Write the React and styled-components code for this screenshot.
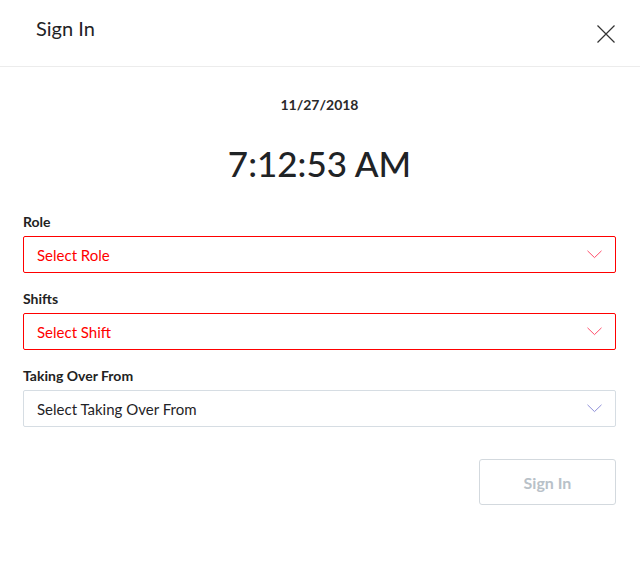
import React from "react";
import styled, { createGlobalStyle } from "styled-components";

const Global = createGlobalStyle`
  html, body { margin: 0; padding: 0; background: #fff; }
  body { font-family: Lato, "Open Sans", sans-serif; color: #1f2326; }
`;

const Dialog = styled.div`
  width: 640px;
  height: 572px;
  background: #fff;
  display: flex;
  flex-direction: column;
`;

const Header = styled.div`
  height: 67px;
  box-sizing: border-box;
  border-bottom: 1px solid #ececec;
  display: flex;
  align-items: flex-start;
  justify-content: space-between;
  padding: 15px 24px 0 36px;
`;

const Title = styled.h1`
  margin: 0;
  font-size: 20px;
  font-weight: 400;
  line-height: 26px;
  color: #1f2326;
`;

const CloseButton = styled.button`
  border: none;
  background: none;
  padding: 0;
  margin-top: 9px;
  width: 20px;
  height: 20px;
  display: flex;
  align-items: center;
  justify-content: center;
  cursor: pointer;
`;

const Body = styled.div`
  padding: 29px 24px 0 23px;
  display: flex;
  flex-direction: column;
`;

const DateText = styled.div`
  text-align: center;
  font-size: 14px;
  font-weight: 700;
  line-height: 18px;
  color: #2a2a2a;
`;

const TimeText = styled.div`
  text-align: center;
  font-size: 35px;
  font-weight: 500;
  line-height: 44px;
  margin-top: 27px;
  color: #1f2326;
`;

const Form = styled.div`
  margin-top: 28px;
  display: flex;
  flex-direction: column;
  gap: 17px;
`;

const Field = styled.div`
  display: flex;
  flex-direction: column;
  gap: 5px;
`;

const Label = styled.label`
  font-size: 14px;
  font-weight: 700;
  line-height: 18px;
  color: #222;
`;

const SelectBox = styled.div`
  height: 37px;
  box-sizing: border-box;
  border: 1px solid ${(p) => (p.$error ? "#ff0000" : "#d6dde3")};
  border-radius: 2px;
  display: flex;
  align-items: center;
  justify-content: space-between;
  padding: 0 13px 0 13px;
  font-size: 15px;
  color: ${(p) => (p.$error ? "#ff0000" : "#1f2326")};
`;

const Actions = styled.div`
  display: flex;
  justify-content: flex-end;
  margin-top: 32px;
`;

const SignInButton = styled.button`
  width: 137px;
  height: 46px;
  border: 1px solid #d3d9de;
  border-radius: 3px;
  background: #fff;
  color: #b8c1c8;
  font-family: Lato, sans-serif;
  font-size: 16px;
  font-weight: 700;
`;

const Chevron = ({ color }) => (
  <svg width="15" height="9" viewBox="0 0 15 9">
    <path d="M0.5 0.8 L7.5 7.6 L14.5 0.8" fill="none" stroke={color} strokeWidth="1" />
  </svg>
);

const Select = ({ text, error }) => (
  <SelectBox $error={error}>
    <span>{text}</span>
    <Chevron color={error ? "#ff4d6a" : "#8e8fd8"} />
  </SelectBox>
);

export default function App() {
  return (
    <Dialog>
      <Global />
      <Header>
        <Title>Sign In</Title>
        <CloseButton aria-label="Close">
          <svg width="18" height="18" viewBox="0 0 18 18">
            <path d="M0.5 0.5 L17.5 17.5 M17.5 0.5 L0.5 17.5" stroke="#333" strokeWidth="1.2" fill="none" />
          </svg>
        </CloseButton>
      </Header>
      <Body>
        <DateText>11/27/2018</DateText>
        <TimeText>7:12:53 AM</TimeText>
        <Form>
          <Field>
            <Label>Role</Label>
            <Select text="Select Role" error />
          </Field>
          <Field>
            <Label>Shifts</Label>
            <Select text="Select Shift" error />
          </Field>
          <Field>
            <Label>Taking Over From</Label>
            <Select text="Select Taking Over From" />
          </Field>
        </Form>
        <Actions>
          <SignInButton>Sign In</SignInButton>
        </Actions>
      </Body>
    </Dialog>
  );
}
